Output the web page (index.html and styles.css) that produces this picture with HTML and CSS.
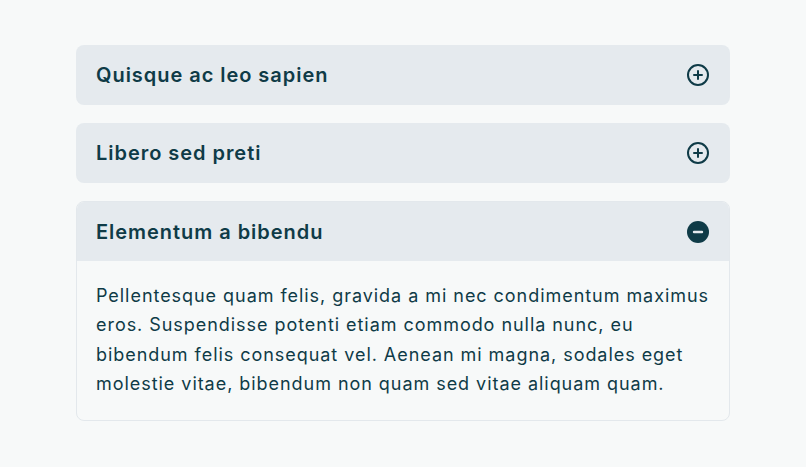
FILE: index.html
```html
<!DOCTYPE html>
<html>
<head>
<meta charset="utf-8">
<link rel="stylesheet" href="styles.css">
</head>
<body>
<div class="accordion">
  <div class="item">
    <div class="header">
      <span class="title">Quisque ac leo sapien</span>
      <svg class="icon" width="24" height="24" viewBox="0 0 24 24" fill="none" stroke="currentColor" stroke-width="2" stroke-linecap="round"><circle cx="12" cy="12" r="10"/><path d="M12 8v8M8 12h8"/></svg>
    </div>
  </div>
  <div class="item">
    <div class="header">
      <span class="title">Libero sed preti</span>
      <svg class="icon" width="24" height="24" viewBox="0 0 24 24" fill="none" stroke="currentColor" stroke-width="2" stroke-linecap="round"><circle cx="12" cy="12" r="10"/><path d="M12 8v8M8 12h8"/></svg>
    </div>
  </div>
  <div class="item open">
    <div class="header">
      <span class="title">Elementum a bibendu</span>
      <svg class="icon" width="24" height="24" viewBox="0 0 24 24"><circle cx="12" cy="12" r="11" fill="currentColor"/><path d="M8 12h8" stroke="#e5eaee" stroke-width="2.4" stroke-linecap="round"/></svg>
    </div>
    <div class="body">Pellentesque quam felis, gravida a mi nec condimentum maximus eros. Suspendisse potenti etiam commodo nulla nunc, eu bibendum felis consequat vel. Aenean mi magna, sodales eget molestie vitae, bibendum non quam sed vitae aliquam quam.</div>
  </div>
</div>
</body>
</html>
```

FILE: styles.css
```css
* { box-sizing: border-box; }
html, body { margin: 0; padding: 0; }
body {
  background: #f7f9f9;
  font-family: Inter, "Noto Sans", sans-serif;
  color: #0f3b47;
}
.accordion {
  width: 654px;
  margin: 45px auto 0;
  display: flex;
  flex-direction: column;
  gap: 18px;
}
.item {
  border-radius: 8px;
  overflow: hidden;
  border: 1px solid transparent;
  background: #e5eaee;
}
.item.open {
  border-color: #e3e8ec;
  background: #f7f9f9;
}
.header {
  background: #e5eaee;
  height: 58px;
  padding: 0 19px;
  display: flex;
  align-items: center;
  justify-content: space-between;
}
.open .header { height: 59px; }
.title {
  font-size: 20px;
  font-weight: 600;
  line-height: 28px;
  letter-spacing: 0.048em;
}
.icon { display: block; color: #0f3b47; }
.body {
  padding: 20px 14px 22px 19px;
  font-size: 18px;
  line-height: 29.25px;
  letter-spacing: 0.053em;
}
```
